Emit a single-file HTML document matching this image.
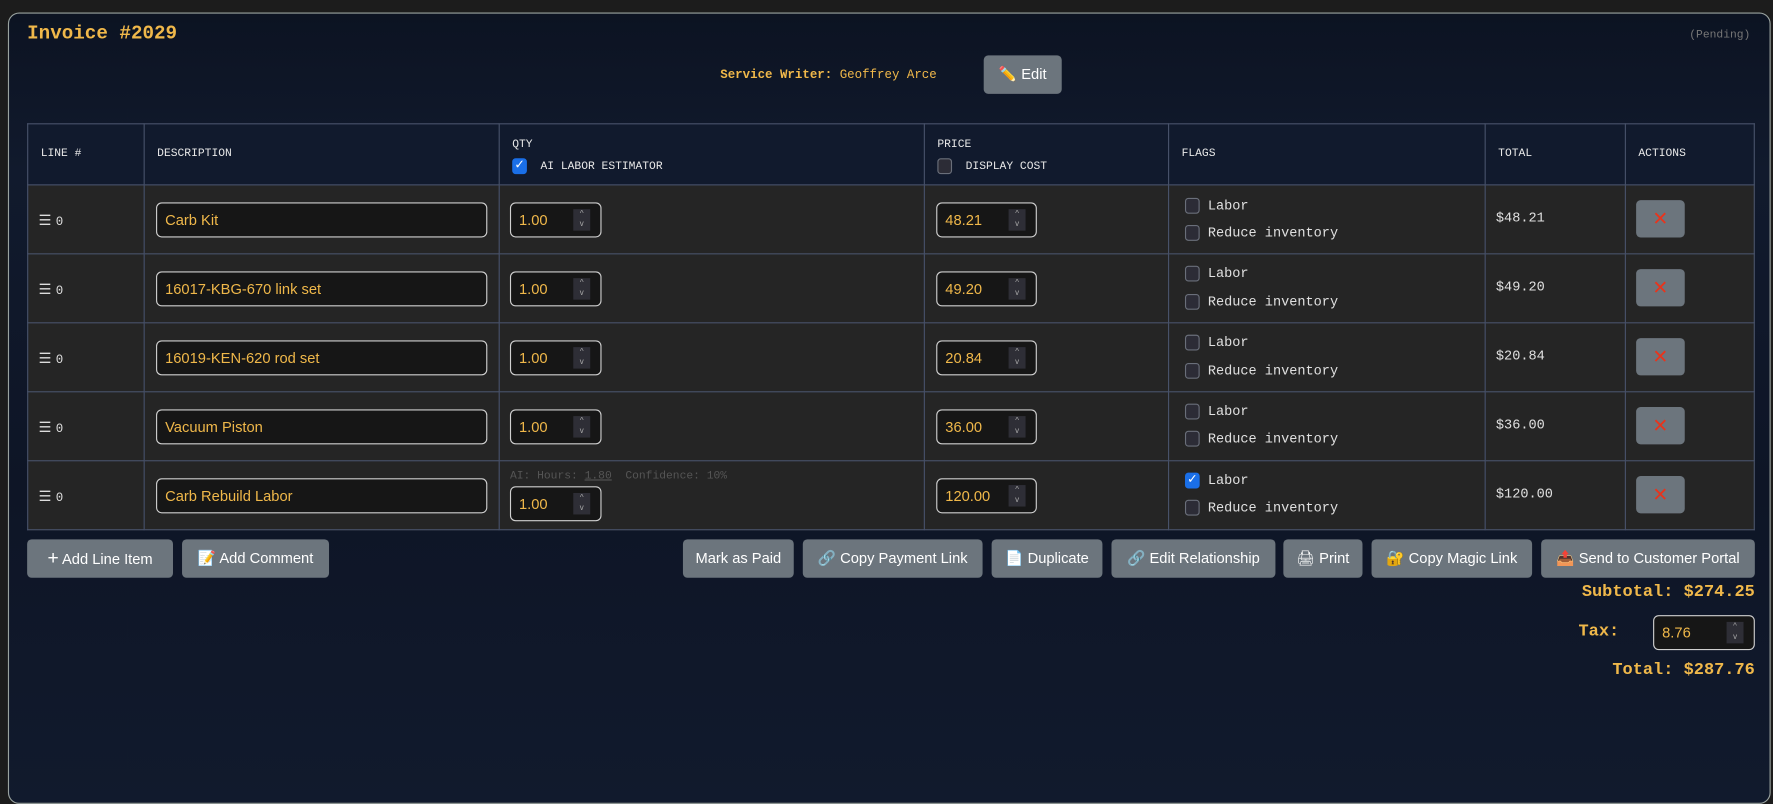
<!DOCTYPE html>
<html><head><meta charset="utf-8"><style>
*{box-sizing:border-box;margin:0;padding:0}
body{width:1773px;height:684px;background:#1c1c1c;position:relative;overflow:hidden;font-family:"Liberation Sans",sans-serif}
#w{position:absolute;left:0;top:0;width:1568px;height:605px;transform:scale(1.1307);transform-origin:0 0}
.card{position:absolute;left:7px;top:11px;width:1559px;height:700px;border:1px solid #9aa3a0;border-radius:10px;background:linear-gradient(180deg,#0c1322 0%,#111a2d 20%,#0e1526 60%,#111a2d 100%)}
.a{position:absolute}
.mono{font-family:"Liberation Mono",monospace}
.gold{color:#f0b84a}
table{position:absolute;left:24px;top:109px;border-collapse:collapse;width:1528px}
td,th{border:1px solid #48526a;vertical-align:middle;text-align:left}
th{background:#111a2d;height:54px;font-family:"Liberation Mono",monospace;font-size:10px;color:#e8e8e8;font-weight:normal;padding-left:11px}
td{background:#252525;height:61px}
.cb{display:inline-block;width:13px;height:14px;border:1px solid #6a6f7a;border-radius:3px;background:#2c2c36;vertical-align:middle}
.cb.on{background:#1a6fe8;border-color:#1a6fe8;color:#fff;font-size:11px;line-height:13px;text-align:center}
.inp{position:absolute;height:31px;border:1px solid #cfcfcf;border-radius:5px;background:#161616;color:#f0b84a;font-size:13px;line-height:29px;padding-left:7px}
.sp{position:absolute;right:9px;top:5px;width:15px;height:19px;background:#2e2e36;color:#aaa;font-size:7px;line-height:9px;text-align:center}
.btn{position:absolute;top:477px;height:34px;background:#6c757d;border-radius:4px;color:#fff;font-size:13px;line-height:34px;text-align:center}
.del{position:absolute;width:43px;height:33px;background:#6c757d;border-radius:4px;color:#e8341c;font-size:17px;line-height:33px;text-align:center}
.fl{position:absolute;font-family:"Liberation Mono",monospace;font-size:12px;color:#e0e0e0}
</style></head><body>
<div id="w">
<div class="card"></div>
<div class="a mono gold" style="left:24px;top:21px;font-size:17px;font-weight:bold">Invoice #2029</div>
<div class="a mono" style="left:1494px;top:26px;font-size:10px;color:#777">(Pending)</div>
<div class="a mono gold" style="left:637px;top:61px;font-size:11px"><b>Service Writer:</b> Geoffrey Arce</div>
<div class="a" style="left:870px;top:49px;width:69px;height:34px;background:#6c757d;border-radius:4px;color:#fff;font-size:13px;line-height:34px;text-align:center">✏️ Edit</div>
<table>
<tr><th style="width:103px">LINE #</th><th style="width:314px">DESCRIPTION</th><th style="width:376px;padding-top:4px">QTY<br><span style="display:inline-block;margin-top:6px"><span class="cb on">✓</span>&nbsp; AI LABOR ESTIMATOR</span></th><th style="width:216px;padding-top:4px">PRICE<br><span style="display:inline-block;margin-top:6px"><span class="cb"></span>&nbsp; DISPLAY COST</span></th><th style="width:280px">FLAGS</th><th style="width:124px">TOTAL</th><th>ACTIONS</th></tr>
<tr><td></td><td></td><td></td><td></td><td></td><td></td><td></td></tr>
<tr><td></td><td></td><td></td><td></td><td></td><td></td><td></td></tr>
<tr><td></td><td></td><td></td><td></td><td></td><td></td><td></td></tr>
<tr><td></td><td></td><td></td><td></td><td></td><td></td><td></td></tr>
<tr><td></td><td></td><td></td><td></td><td></td><td></td><td></td></tr>
</table>
<div class="a" style="left:34px;top:187px;color:#ddd;font-size:13px">☰ <span class="mono" style="font-size:11px">0</span></div>
<div class="a" style="left:34px;top:248px;color:#ddd;font-size:13px">☰ <span class="mono" style="font-size:11px">0</span></div>
<div class="a" style="left:34px;top:309px;color:#ddd;font-size:13px">☰ <span class="mono" style="font-size:11px">0</span></div>
<div class="a" style="left:34px;top:370px;color:#ddd;font-size:13px">☰ <span class="mono" style="font-size:11px">0</span></div>
<div class="a" style="left:34px;top:431px;color:#ddd;font-size:13px">☰ <span class="mono" style="font-size:11px">0</span></div>

<div class="inp" style="left:138px;top:179px;width:293px">Carb Kit</div>
<div class="inp" style="left:138px;top:240px;width:293px">16017-KBG-670 link set</div>
<div class="inp" style="left:138px;top:301px;width:293px">16019-KEN-620 rod set</div>
<div class="inp" style="left:138px;top:362px;width:293px">Vacuum Piston</div>
<div class="inp" style="left:138px;top:423px;width:293px">Carb Rebuild Labor</div>

<div class="inp" style="left:451px;top:179px;width:81px">1.00<div class="sp">^<br>v</div></div>
<div class="inp" style="left:451px;top:240px;width:81px">1.00<div class="sp">^<br>v</div></div>
<div class="inp" style="left:451px;top:301px;width:81px">1.00<div class="sp">^<br>v</div></div>
<div class="inp" style="left:451px;top:362px;width:81px">1.00<div class="sp">^<br>v</div></div>
<div class="a mono" style="left:451px;top:416px;font-size:10px;color:#555">AI: Hours: <u>1.80</u>&nbsp; Confidence: 10%</div>
<div class="inp" style="left:451px;top:430px;width:81px">1.00<div class="sp">^<br>v</div></div>

<div class="inp" style="left:828px;top:179px;width:89px">48.21<div class="sp">^<br>v</div></div>
<div class="inp" style="left:828px;top:240px;width:89px">49.20<div class="sp">^<br>v</div></div>
<div class="inp" style="left:828px;top:301px;width:89px">20.84<div class="sp">^<br>v</div></div>
<div class="inp" style="left:828px;top:362px;width:89px">36.00<div class="sp">^<br>v</div></div>
<div class="inp" style="left:828px;top:423px;width:89px">120.00<div class="sp">^<br>v</div></div>

<div class="fl" style="left:1048px;top:175px"><span class="cb"></span> Labor</div>
<div class="fl" style="left:1048px;top:199px"><span class="cb"></span> Reduce inventory</div>
<div class="fl" style="left:1048px;top:235px"><span class="cb"></span> Labor</div>
<div class="fl" style="left:1048px;top:260px"><span class="cb"></span> Reduce inventory</div>
<div class="fl" style="left:1048px;top:296px"><span class="cb"></span> Labor</div>
<div class="fl" style="left:1048px;top:321px"><span class="cb"></span> Reduce inventory</div>
<div class="fl" style="left:1048px;top:357px"><span class="cb"></span> Labor</div>
<div class="fl" style="left:1048px;top:381px"><span class="cb"></span> Reduce inventory</div>
<div class="fl" style="left:1048px;top:418px"><span class="cb on">✓</span> Labor</div>
<div class="fl" style="left:1048px;top:442px"><span class="cb"></span> Reduce inventory</div>

<div class="fl" style="left:1323px;top:186px">$48.21</div>
<div class="fl" style="left:1323px;top:247px">$49.20</div>
<div class="fl" style="left:1323px;top:308px">$20.84</div>
<div class="fl" style="left:1323px;top:369px">$36.00</div>
<div class="fl" style="left:1323px;top:430px">$120.00</div>

<div class="del" style="left:1447px;top:177px">✕</div>
<div class="del" style="left:1447px;top:238px">✕</div>
<div class="del" style="left:1447px;top:299px">✕</div>
<div class="del" style="left:1447px;top:360px">✕</div>
<div class="del" style="left:1447px;top:421px">✕</div>

<div class="btn" style="left:24px;width:129px"><b style="font-size:17px;font-weight:normal">+</b> Add Line Item</div>
<div class="btn" style="left:161px;width:130px">📝 Add Comment</div>
<div class="btn" style="left:604px;width:98px">Mark as Paid</div>
<div class="btn" style="left:710px;width:159px">🔗 Copy Payment Link</div>
<div class="btn" style="left:877px;width:98px">📄 Duplicate</div>
<div class="btn" style="left:983px;width:145px">🔗 Edit Relationship</div>
<div class="btn" style="left:1135px;width:70px">🖨 Print</div>
<div class="btn" style="left:1213px;width:142px">🔐 Copy Magic Link</div>
<div class="btn" style="left:1363px;width:189px">📤 Send to Customer Portal</div>

<div class="a mono gold" style="right:16px;top:515px;font-size:15px;font-weight:bold">Subtotal: $274.25</div>
<div class="a mono gold" style="left:1396px;top:550px;font-size:15px;font-weight:bold">Tax:</div>
<div class="inp" style="left:1462px;top:544px;width:90px">8.76<div class="sp">^<br>v</div></div>
<div class="a mono gold" style="right:16px;top:584px;font-size:15px;font-weight:bold">Total: $287.76</div>
</div>
</body></html>
